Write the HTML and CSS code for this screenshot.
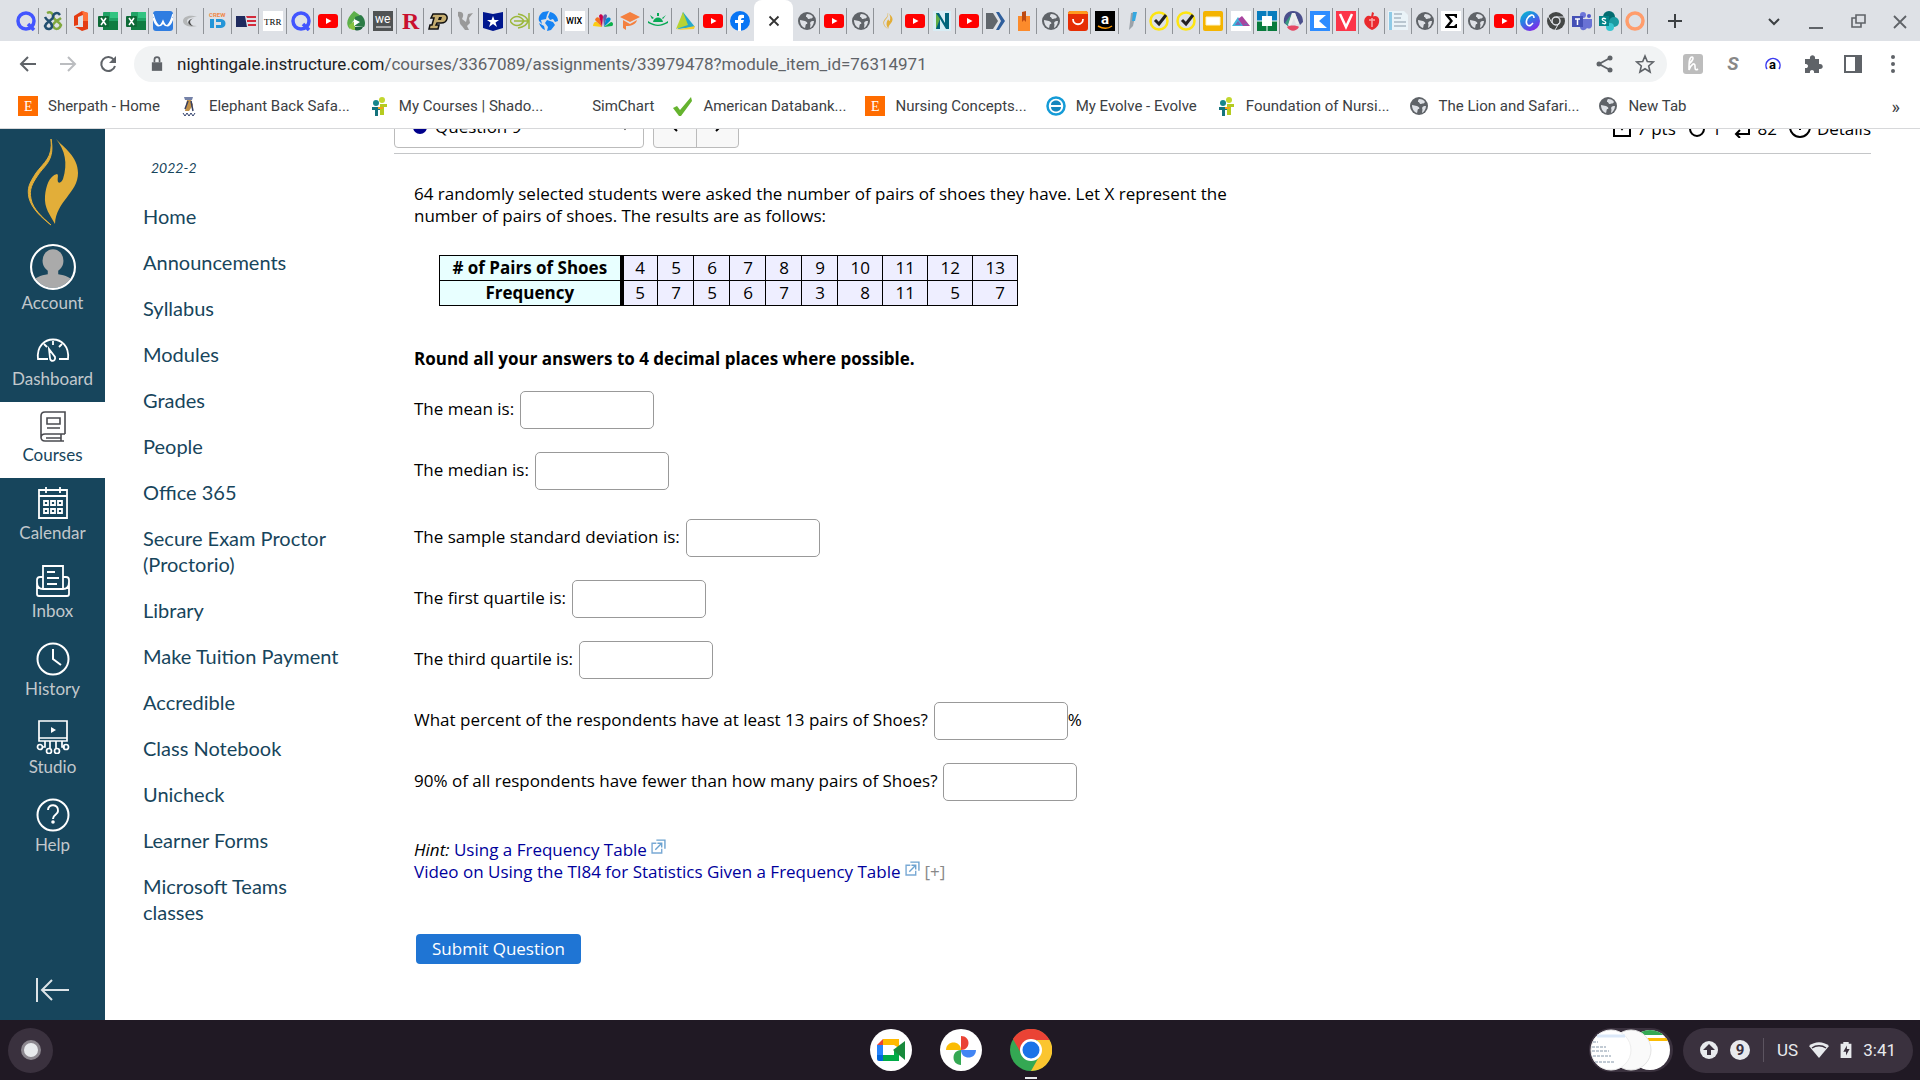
FILE: index.html
```
<!DOCTYPE html>
<html lang="en">
<head>
<meta charset="utf-8">
<title>Nightingale course assignment</title>
<link rel="stylesheet" href="styles.css">
</head>
<body>
<svg class="sprites" aria-hidden="true">
  <symbol id="yt" viewBox="0 0 20 20"><rect y="3" width="20" height="14" rx="3" fill="#f00"/><path d="M8 7l5.500 3L8 13z" fill="#fff"/></symbol>
  <symbol id="globe" viewBox="0 0 20 20"><circle cx="10" cy="10" r="9" fill="#5f6368"/><path d="M3 9c2 0 3 1 5 1 2 1 3 2 2 3-2 0-1 2-2 4-3-1-5-4-5-8zM10 3c3 0 5 1 6 3-1 2-2 1-4 2-2 0-1-2-3-2 0-1 0-2 1-3zM17 10c0 3-2 6-4 7 0-2 1-3 0-5 1-2 2-2 4-2z" fill="#dee1e6"/></symbol>
  <symbol id="q" viewBox="0 0 20 20"><circle cx="10" cy="10" r="8" fill="none" stroke="#4255ff" stroke-width="3.500"/><path d="M12 13l6 6" stroke="#4255ff" stroke-width="3.500"/></symbol>
  <symbol id="excel" viewBox="0 0 20 20"><rect x="5" y="1" width="15" height="18" rx="1" fill="#21a366"/><path d="M5 10h15v9H5z" fill="#107c41"/><path d="M12 1h8v6h-8z" fill="#33c481"/><rect y="5" width="11" height="11" rx="1" fill="#0e6a37"/><path d="M3 7l5 7M8 7l-5 7" stroke="#fff" stroke-width="1.600"/></symbol>
  <symbol id="norton" viewBox="0 0 20 20"><circle cx="10" cy="10" r="8.500" fill="none" stroke="#fde512" stroke-width="2.500"/><path d="M6 9l4 4 7-9" fill="none" stroke="#222" stroke-width="3"/></symbol>
  <symbol id="people" viewBox="0 0 20 20"><circle cx="13" cy="4" r="3" fill="#c3d72f"/><circle cx="7" cy="7" r="3" fill="#16868c"/><path d="M3 11h8v3H9v6H6v-6H3z" fill="#14737c"/><path d="M11 8h7v3h-3v8h-4z" fill="#b5cb20"/><path d="M9 11h5v2H9z" fill="#f4a11a"/></symbol>
  <symbol id="ext" viewBox="0 0 14 14"><path d="M5 4H1v9h9V9" fill="none" stroke="#79a9d5" stroke-width="1.300"/><path d="M5 1h8v8M4 10l6-6M6 4h4v4" fill="none" stroke="#6ba2d0" stroke-width="1.300"/></symbol>
  <symbol id="flame" viewBox="0 0 52 88"><path d="M29 1c7 8 22 17 22 34 0 20-22 28-23 51-5-9-11-16-10-28 1-10 4-20 12-22 2 1 0 4 1 8 2 2 4-1 5-3 5-16 2-29-7-40z" fill="#e2ae39"/><path d="M24 1c2 19-7 23-15 34C2 46 0 50 2 60c3 11 12 19 22 27C15 79 6 71 4 61 2 51 5 46 11 37 18 27 28 22 24 1z" fill="#e2ae39" stroke="#e2ae39"/></symbol>
</svg>

<header class="browser">
  <div class="tabs">
    <div class="tab-group group-a">
      <button class="tab"><svg><use href="#q"/></svg></button>
      <button class="tab"><svg viewBox="0 0 20 20"><g fill="none" stroke-width="2.500"><path d="M4 2c4-2 6 1 6 3 0 4 6 5 8 9-2 5-6 5-8 1-1-3 4-5 8-8" stroke="#80a83e"/><path d="M17 4c-3-4-7-1-7 2S4 10 2 15c2 5 7 3 7 0 0-4-5-5-7-9" stroke="#224f70"/></g></svg></button>
      <button class="tab"><svg viewBox="0 0 20 20"><path d="M11 0l6 2v16l-6 2-7-4h8V4L7 6v8l-4 1V5z" fill="#e43c12"/><path d="M11 0l6 2v8h-5V4z" fill="#ff7139"/></svg></button>
      <button class="tab"><svg><use href="#excel"/></svg></button>
      <button class="tab"><svg><use href="#excel"/></svg></button>
      <button class="tab"><svg viewBox="0 0 20 20"><rect width="20" height="20" rx="3" fill="#2f7de1"/><path d="M0 7c3 10 7 10 10 3 3 7 7 7 10-3M0 3c4 14 7 13 10 9 3 4 6 5 10-9" fill="none" stroke="#fff" stroke-width="1.300"/></svg></button>
      <button class="tab"><svg viewBox="0 0 20 20"><path d="M16 6C8 3 2 6 2 10s6 7 14 5C9 15 6 12 6 10s3-4 10-4z" fill="#b5b7b8"/><path d="M13 7c-5 2-5 5-1 8-6-1-7-6 1-8z" fill="#444"/></svg></button>
      <button class="tab"><svg viewBox="0 0 20 20"><text x="1" y="6" font-size="6" font-weight="700" fill="#f08848">CREW</text><path d="M2 8h4v9H2zM8 8h5c6 0 6 9 0 9H8v-3h5v-3H8z" fill="#2596d8"/></svg></button>
      <button class="tab"><svg viewBox="0 0 20 20"><path d="M0 5h9l2 11H0z" fill="#1e2a5e"/><path d="M10 5h10v2H11zM11 9h9v2h-9zM12 13h8v2h-8z" fill="#d32b3c"/></svg></button>
      <button class="tab"><svg viewBox="0 0 20 20"><path d="M0 0h20v20H0z" fill="#fff"/><text class="serif" x="1" y="14" font-size="9">TRR</text></svg></button>
      <button class="tab"><svg><use href="#q"/></svg></button>
      <button class="tab"><svg><use href="#yt"/></svg></button>
      <button class="tab"><svg viewBox="0 0 20 20"><path d="M8 0l7 5-8 5-3 8c-5-5-3-11 4-18z" fill="#5db04b"/><path d="M15 4c4 3 5 9 3 12l-9-1V6z" fill="#2b7b46"/><path d="M3 14l6-4v9c-4 0-6-2-6-5z" fill="#87c341"/><path d="M8 8l6 3-6 4z" fill="#fff"/><path d="M9 16h8c-2 4-6 4-8 3z" fill="#1d623c"/></svg></button>
      <button class="tab"><svg viewBox="0 0 20 20"><path d="M0 0h20v20H0z" fill="#505354"/><text x="2" y="12" font-size="12" fill="#fff">we</text><path d="M3 16h15" stroke="#fff"/></svg></button>
      <button class="tab"><svg viewBox="0 0 20 20"><text class="serif" x="1" y="18" font-size="24" font-weight="700" fill="#c9102f">R</text></svg></button>
      <button class="tab"><svg viewBox="0 0 20 20"><path d="M5 3h11c5 1 4 9-3 9H9l-1 2h3l-1 4H1l1-4h2l2-7H3z" fill="#c5ad70" stroke="#111" stroke-width="1.500"/><path d="M11 6h3l-1 3h-3z" fill="#111"/></svg></button>
      <button class="tab"><svg viewBox="0 0 20 20"><path d="M3 1c6-1 6 4 4 7l4 3 2-8 5-1-4 5 1 5-3 3 2 4h-4l-3-4c-4-3-1-7-4-10z" fill="#999"/></svg></button>
      <button class="tab"><svg viewBox="0 0 20 20"><path d="M0 1l10 2 10-2v16l-10 3-10-3z" fill="#00178e"/><path d="M10 5l1.500 4H16l-3.500 2.500L14 16l-4-3-4 3 1.500-4.500L4 9h4.500z" fill="#fff"/></svg></button>
      <button class="tab"><svg viewBox="0 0 20 20"><g fill="none" stroke="#9cb83c" stroke-width="1.500"><path d="M0 10c4-6 10-6 14 0-4 6-10 6-14 0zM4 10h15M8 3c6 1 9 3 10 7-1 4-4 6-10 7M19 2v16"/></g></svg></button>
      <button class="tab"><svg viewBox="0 0 20 20"><path d="M5 1l6-1-2 4-1 4-5 1 1 4-3-3C0 6 2 3 5 1zM12 1c5 1 8 5 8 9l-3 1-2-3-3 1-2-3zM9 9l6 2 2 3-4 5-4 1 1-4-3-4zM1 12l5 3 1 4c-3-1-5-4-6-7z" fill="#1683f3"/></svg></button>
      <button class="tab"><svg viewBox="0 0 20 20"><path d="M0 0h20v20H0z" fill="#fff"/><text x="1" y="13" font-size="9" font-weight="500">WIX</text></svg></button>
      <button class="tab"><svg viewBox="0 0 20 20"><path d="M9 16L0 15c0-4 3-5 4-4z" fill="#fccc12"/><path d="M9 16L2 9c1-4 4-3 5-1z" fill="#f37021"/><path d="M9 16L6 5c1-3 4-2 4 1z" fill="#cc004c"/><path d="M11 16L10 6c1-4 4-3 4-1z" fill="#6460aa"/><path d="M11 16l2-8c3-3 6-1 4 2z" fill="#0089d0"/><path d="M11 16l7-5c3 0 2 4 1 4z" fill="#0db14b"/></svg></button>
      <button class="tab"><svg viewBox="0 0 20 20"><path d="M0 6l10-5 10 5-10 5z" fill="#f4803f"/><path d="M3 9v8l3 2v-4c6 0 10-2 11-6l-7 4z" fill="#f4803f"/></svg></button>
      <button class="tab"><svg viewBox="0 0 20 20"><path d="M5 11c1-6 9-6 10 0zM9 2h2v3H9zM2 4l4 3-2 1zM18 4l-3 4-1-1zM0 10c8 5 12 5 20 0v2c-8 4-12 4-20 0z" fill="#08a955"/></svg></button>
      <button class="tab"><svg viewBox="0 0 20 20"><path d="M8 1l12 15-17 2z" fill="#27a8c9"/><path d="M8 1l5 13-12 4z" fill="#b8d334"/><path d="M1 19l19-4-1 3z" fill="#f5ce2d"/></svg></button>
      <button class="tab"><svg><use href="#yt"/></svg></button>
      <button class="tab last"><svg viewBox="0 0 20 20"><circle cx="10" cy="10" r="10" fill="#0875f4"/><path d="M8 20v-8H5V9h3V7c0-3 2-4 6-3v3c-2 0-3 0-3 2h3l-1 3h-2v8z" fill="#fff"/></svg></button>
    </div>
    <button class="tab tab-active" aria-label="Close tab"><svg viewBox="0 0 20 20"><path d="M5 5l10 10M15 5L5 15" stroke="#333" stroke-width="2"/></svg></button>
    <div class="tab-group group-b">
      <button class="tab"><svg><use href="#globe"/></svg></button>
      <button class="tab"><svg><use href="#yt"/></svg></button>
      <button class="tab"><svg><use href="#globe"/></svg></button>
      <button class="tab"><svg class="small"><use href="#flame"/></svg></button>
      <button class="tab"><svg><use href="#yt"/></svg></button>
      <button class="tab"><svg viewBox="0 0 20 20"><path d="M1 0h18v20H1z" fill="#d8edf5"/><path d="M4 18V2h3l6 10V2h4v16h-3L8 8v10z" fill="#00647a"/><path d="M4 2v16l4-10z" fill="#60ad46"/></svg></button>
      <button class="tab"><svg><use href="#yt"/></svg></button>
      <button class="tab"><svg viewBox="0 0 20 20"><path d="M0 2h7l5 8-5 8H0z" fill="#60666c"/><path d="M10 1l5 9-5 9h3l6-9-6-9z" fill="#2f5f9c"/></svg></button>
      <button class="tab"><svg viewBox="0 0 20 20"><path d="M4 5h12v15H4z" fill="#fc8b2c"/><path d="M8 1l4-1v11l-2-2-2 2z" fill="#bd4a12"/></svg></button>
      <button class="tab"><svg><use href="#globe"/></svg></button>
      <button class="tab"><svg viewBox="0 0 20 20"><rect width="20" height="20" rx="3" fill="#e62e04"/><path d="M0 3q0-3 3-3h14q3 0 3 3z" fill="#ff9a1f"/><path d="M5 8c0 7 10 7 10 0" fill="none" stroke="#fff" stroke-width="1.800"/></svg></button>
      <button class="tab"><svg viewBox="0 0 20 20"><path d="M0 0h20v20H0z"/><text x="6" y="13" font-size="15" font-weight="700" fill="#fff">a</text><path d="M3 15c5 3 10 3 14 0" fill="none" stroke="#f90" stroke-width="1.500"/></svg></button>
      <button class="tab"><svg viewBox="0 0 20 20"><path d="M9 2l5-1-3 14-4 4 1-8z" fill="#9ba3aa"/><path d="M11 1h4l-2 9h-3z" fill="#35a8e0"/></svg></button>
      <button class="tab"><svg><use href="#norton"/></svg></button>
      <button class="tab"><svg><use href="#norton"/></svg></button>
      <button class="tab"><svg viewBox="0 0 20 20"><rect width="20" height="20" rx="2" fill="#f4b400"/><path d="M3 6h14v8H3z" fill="#fff" stroke="#fff3c4"/></svg></button>
      <button class="tab"><svg viewBox="0 0 20 20"><path d="M0 0h20v20H0z" fill="#fff"/><path d="M1 15l6-9 6 9z" fill="#40b6dd"/><path d="M7 8l4-3 8 10h-7z" fill="#a9449e"/><path d="M4 14l3-4 3 4zM12 14l3-2 2 2z" fill="#716bb4"/></svg></button>
    </div>
    <div class="tab-group group-c">
      <button class="tab"><svg viewBox="0 0 20 20"><path d="M0 0h20v10H0z" fill="#087cbd"/><path d="M0 10h20v10H0z" fill="#087b3d"/><rect x="5" y="5" width="10" height="10" fill="#fff"/><path d="M10 0v20M0 10h5M15 10h5" stroke="#fff"/></svg></button>
      <button class="tab"><svg viewBox="0 0 20 20"><path d="M10 0C3 0 0 6 1 12l4 3L9 2h3l5 12 3-3C20 4 16 0 10 0z" fill="#4a4f8c"/><path d="M9 2L5 15l-3-3z" fill="#3a9c82"/><path d="M4 16c2-2 10-2 12 0-3 5-9 5-12 0z" fill="#e54864"/><path d="M9 2h3l4 11h-3l-2-6-3 7H5z" fill="#eee"/></svg></button>
      <button class="tab"><svg viewBox="0 0 20 20"><path d="M0 0h20v20H0z" fill="#2d8cff"/><path d="M4 4h12L9 10l8 7H4z" fill="#fff"/></svg></button>
      <button class="tab"><svg viewBox="0 0 20 20"><path d="M0 0h20v20H0z" fill="#fc3549"/><path d="M4 3l6 13 6-13" fill="none" stroke="#fff" stroke-width="2.500"/></svg></button>
      <button class="tab"><svg viewBox="0 0 20 20"><path d="M10 19C3 16 0 10 4 6c2-2 4-1 6 0 3-2 6-1 7 2 1 5-2 9-7 11zM9 6l1-5 2 1-1 4z" fill="#e92a2d"/><path d="M10 7v9M7 9h6" stroke="#f9aaaa" stroke-width="1.500"/></svg></button>
      <button class="tab"><svg viewBox="0 0 20 20"><path d="M0 0h16l4 4v15H0z" fill="#eaf3f8"/><path d="M1 1h3v18H1z" fill="#8ecae6"/><path d="M6 3h8M6 7h7M6 11h12M6 15h12" stroke="#a9b8c2" stroke-width="1.500"/></svg></button>
      <button class="tab"><svg><use href="#globe"/></svg></button>
      <button class="tab"><svg viewBox="0 0 20 20"><path d="M0 0h20v20H0z" fill="#fff"/><path d="M4 3h12v4h-1l-2-2H8l4 5-4 5h5l2-2h1v4H4v-1l5-6-5-6z"/></svg></button>
      <button class="tab"><svg><use href="#globe"/></svg></button>
      <button class="tab"><svg><use href="#yt"/></svg></button>
      <button class="tab"><svg viewBox="0 0 20 20"><defs><linearGradient id="cg" x2=".6" y2="1"><stop stop-color="#00c4cc"/><stop offset=".5" stop-color="#2c7be5"/><stop offset="1" stop-color="#7d2ae8"/></linearGradient></defs><circle cx="10" cy="10" r="10" fill="url(#cg)"/><path d="M14 7c0-5-5-3-7 1-2 5 1 8 4 6l2-2" fill="none" stroke="#fff" stroke-width="1.600"/></svg></button>
      <button class="tab"><svg viewBox="0 0 20 20"><circle cx="10" cy="10" r="9" fill="#444746"/><circle cx="10" cy="10" r="4" fill="#444746" stroke="#dee1e6" stroke-width="1.500"/><path d="M10 6h9M6 12L2 5M13 12l-4 7" stroke="#dee1e6"/></svg></button>
      <button class="tab"><svg viewBox="0 0 20 20"><circle cx="11" cy="4" r="3" fill="#6c75da"/><circle cx="17" cy="5" r="2" fill="#5059c9"/><path d="M8 8h12v7c-1 3-3 3-5 2-3 4-7 2-7-1z" fill="#6972d4"/><path d="M0 5h11v11H0z" fill="#4450b6"/><path d="M3 8h5M5.500 8v6" stroke="#fff" stroke-width="1.500"/></svg></button>
      <button class="tab"><svg viewBox="0 0 20 20"><circle cx="10" cy="6" r="6" fill="#036c70"/><circle cx="15" cy="11" r="5" fill="#1a9ba1"/><circle cx="11" cy="16" r="4" fill="#37c6d0"/><path d="M0 5h10v10H0z" fill="#038387"/><path d="M7 8c-4-2-5 1-2 2s2 4-2 2" fill="none" stroke="#fff" stroke-width="1.300"/></svg></button>
      <button class="tab"><svg viewBox="0 0 20 20"><circle cx="10" cy="10" r="8" fill="none" stroke="#ff9d6c" stroke-width="3.500"/></svg></button>
    </div>
    <div class="window-controls">
      <button aria-label="New tab"><svg viewBox="0 0 20 20"><path d="M10 3v14M3 10h14" stroke="#3c4043" stroke-width="2"/></svg></button>
      <span class="grow"></span>
      <button aria-label="Search tabs"><svg viewBox="0 0 20 20"><path d="M5 8l5 5 5-5" stroke="#3c4043" stroke-width="2" fill="none"/></svg></button>
      <button aria-label="Minimize"><svg viewBox="0 0 20 20"><path d="M3 17h14" stroke="#5f6368" stroke-width="2"/></svg></button>
      <button aria-label="Restore"><svg viewBox="0 0 20 20"><path d="M8 4h9v8H8zM8 7H4v9h9v-4" stroke="#5f6368" stroke-width="1.600" fill="none"/></svg></button>
      <button aria-label="Close"><svg viewBox="0 0 20 20"><path d="M4 5l12 12M16 5L4 17" stroke="#5f6368" stroke-width="1.800"/></svg></button>
    </div>
  </div>

  <div class="toolbar">
    <div class="history-buttons">
      <button aria-label="Back"><svg viewBox="0 0 20 20"><path d="M18 10H3M10 3l-7 7 7 7" stroke="#5f6368" stroke-width="2" fill="none"/></svg></button>
      <button aria-label="Forward"><svg viewBox="0 0 20 20"><path d="M2 10h15M10 3l7 7-7 7" stroke="#bbbdc0" stroke-width="2" fill="none"/></svg></button>
      <button aria-label="Reload"><svg viewBox="0 0 20 20"><path d="M16 6a7 7 0 1 0 1 6" stroke="#5f6368" stroke-width="2" fill="none"/><path d="M18 2v7h-7z" fill="#5f6368"/></svg></button>
    </div>
    <div class="omnibox">
      <svg class="lock" viewBox="0 0 14 18"><path d="M1 7h12v10H1z" fill="#5f6368"/><path d="M4 7V4a3 3 0 0 1 6 0v3" fill="none" stroke="#5f6368" stroke-width="2"/></svg>
      <span class="url"><b>nightingale.instructure.com</b>/courses/3367089/assignments/33979478?module_item_id=76314971</span>
      <button aria-label="Share"><svg viewBox="0 0 20 20"><path d="M15 4L4 10l11 6" stroke="#5f6368" stroke-width="1.800" fill="none"/><g fill="#5f6368"><circle cx="15" cy="4" r="2.500"/><circle cx="4" cy="10" r="2.500"/><circle cx="15" cy="16" r="2.500"/></g></svg></button>
      <button aria-label="Bookmark"><svg viewBox="0 0 20 20"><path d="M10 2l2.300 5.500 6 .5-4.600 4 1.400 6-5.100-3.200L4.900 18l1.400-6-4.600-4 6-.5z" fill="none" stroke="#5f6368" stroke-width="1.600"/></svg></button>
    </div>
    <div class="extensions">
      <button aria-label="Honey"><svg viewBox="0 0 20 20"><rect width="20" height="20" rx="3" fill="#bdbdbd"/><path d="M6 10c4-3 5-7 3-7-3 0-3 6-3 13 2-6 6-8 6-4 0 3 0 5 3 3" stroke="#fff" stroke-width="1.600" fill="none"/></svg></button>
      <button class="scribe" aria-label="Scribe">S</button>
      <button aria-label="Reader"><svg viewBox="0 0 20 20"><path d="M4 15a7 7 0 1 1 12 0" fill="none" stroke="#3b3bf0" stroke-width="1.500"/><text x="6" y="15" font-size="13" font-weight="700">a</text></svg></button>
      <button aria-label="Extensions"><svg viewBox="0 0 20 20"><path d="M2 5h5c-1-5 6-5 5 0h4v5c5-1 5 6 0 5v4h-5c1-4-5-4-4 0H2v-5c4 1 4-5 0-4z" fill="#5f6368"/></svg></button>
      <button aria-label="Side panel"><svg viewBox="0 0 20 20"><path d="M2 2h16v16H2z" fill="none" stroke="#5f6368" stroke-width="2"/><path d="M12 2h6v16h-6z" fill="#5f6368"/></svg></button>
      <button aria-label="Menu"><svg viewBox="0 0 20 20"><g fill="#5f6368"><circle cx="10" cy="3" r="2"/><circle cx="10" cy="10" r="2"/><circle cx="10" cy="17" r="2"/></g></svg></button>
    </div>
  </div>

  <nav class="bookmarks">
    <a href="#"><svg viewBox="0 0 20 20"><path d="M0 0h20v20H0z" fill="#ff6c00"/><text class="serif" x="6" y="15" font-size="14" fill="#fff">E</text></svg>Sherpath - Home</a>
    <a href="#"><svg viewBox="0 0 20 20"><path d="M5 1h9l-1 3H6z" fill="#7582a8"/><path d="M8 4h4l2 5-4 6H6z" fill="#c29148"/><path d="M12 5l2 10M9 5L6 13" stroke="#384061" stroke-width="1.500"/><path d="M4 17l2 3 2-3 2 3 2-3 2 3 2-3" fill="none" stroke="#31406c"/></svg>Elephant Back Safa...</a>
    <a href="#"><svg><use href="#people"/></svg>My Courses | Shado...</a>
    <a href="#"><svg></svg>SimChart</a>
    <a href="#"><svg viewBox="0 0 20 20"><path d="M0 12l4-2 3 4L18 1l1 4L8 20H6z" fill="#65b32e"/></svg>American Databank...</a>
    <a href="#"><svg viewBox="0 0 20 20"><path d="M0 0h20v20H0z" fill="#ff6c00"/><text class="serif" x="6" y="15" font-size="14" fill="#fff">E</text></svg>Nursing Concepts...</a>
    <a href="#"><svg viewBox="0 0 20 20"><circle cx="10" cy="10" r="8.500" fill="#fff" stroke="#149bd7" stroke-width="2.500"/><path d="M5 9c0-6 10-6 10 0zM5 11h10c0 6-10 6-10 0z" fill="#1686bd"/></svg>My Evolve - Evolve</a>
    <a href="#"><svg><use href="#people"/></svg>Foundation of Nursi...</a>
    <a href="#"><svg><use href="#globe"/></svg>The Lion and Safari...</a>
    <a href="#"><svg><use href="#globe"/></svg>New Tab</a>
    <button class="more" aria-label="More bookmarks">»</button>
  </nav>
</header>

<div class="page">
  <nav class="global-nav">
    <a class="logo" href="#" aria-label="Nightingale"><svg><use href="#flame"/></svg></a>
    <a class="account" href="#"><svg viewBox="0 0 44 44"><defs><clipPath id="av"><circle cx="22" cy="22" r="20"/></clipPath></defs><g clip-path="url(#av)" fill="#aaa"><ellipse cx="22" cy="16" rx="10" ry="11"/><path d="M17 24h10v5c8 1 14 4 16 10v5H1v-5c2-6 8-9 16-10z"/></g><circle cx="22" cy="22" r="21" fill="none" stroke="#fff" stroke-width="2"/></svg>Account</a>
    <a class="upper" href="#"><svg viewBox="0 0 34 32"><g fill="none" stroke="#fff" stroke-width="1.800"><path d="M12 25H2c-3-26 33-26 30 0h-9M17 7v4M8 10l3 3M26 10l-3 3M13 15l6 8c1 5-5 5-5 1z"/></g></svg>Dashboard</a>
    <a class="upper active" href="#"><svg viewBox="0 0 34 32"><g fill="none" stroke="#4a4b50" stroke-width="1.600"><path d="M29 24V2H9Q5 2 5 6v21q0 4 4 4h19M29 24H9q-4 0-4 4M10 28h15M25 24v7M11 8h13v6H11zM11 18h13"/></g></svg>Courses</a>
    <a href="#"><svg viewBox="0 0 34 34"><g fill="none" stroke="#fff" stroke-width="1.800"><path d="M3 4h28v28H3zM3 10h28M10 1v6M24 1v6M8 15h4v4H8zM15 15h4v4h-4zM22 15h4v4h-4zM8 23h4v4H8zM15 23h4v4h-4zM22 23h4v4h-4z"/></g></svg>Calendar</a>
    <a href="#"><svg viewBox="0 0 34 34"><g fill="none" stroke="#fff" stroke-width="1.800"><path d="M7 24V2h20v22M7 13H4q-3 0-3 3v14q0 2 2 2h28q2 0 2-2V16q0-3-3-3h-3M1 18c0 5 2 7 6 7h20c4 0 6-2 6-7M11 8h8M11 14h12M11 20h10"/></g></svg>Inbox</a>
    <a href="#"><svg viewBox="0 0 34 34"><g fill="none" stroke="#fff" stroke-width="2"><circle cx="17" cy="17" r="15.500"/><path d="M17 7v10l8 6"/></g></svg>History</a>
    <a href="#"><svg viewBox="0 0 34 34"><g fill="none" stroke="#fff" stroke-width="1.700"><path d="M3 1h28v20H3zM3 18h28M9 21v6H6M14 21v7M20 21v7M26 21v6h3"/><circle cx="4" cy="27" r="2.500"/><circle cx="13" cy="31" r="2.500"/><circle cx="21" cy="31" r="2.500"/><circle cx="30" cy="27" r="2.500"/></g><path d="M15 7l5 3-5 3z" fill="#fff"/></svg>Studio</a>
    <a href="#"><svg viewBox="0 0 34 34"><g fill="none" stroke="#fff" stroke-width="2"><circle cx="17" cy="17" r="15.500"/><path d="M12 12c0-7 11-6 10 1 0 4-5 3-5 8"/></g><circle cx="17" cy="24" r="1.800" fill="#fff"/></svg>Help</a>
    <button class="collapse" aria-label="Minimize navigation"><svg viewBox="0 0 34 24"><path d="M1 0v24M33 12H7M16 2L6 12l10 10" fill="none" stroke="#dce3e7" stroke-width="2"/></svg></button>
  </nav>

  <nav class="course-menu">
    <p class="term">2022-2</p>
    <a href="#">Home</a>
    <a href="#">Announcements</a>
    <a href="#">Syllabus</a>
    <a href="#">Modules</a>
    <a href="#">Grades</a>
    <a href="#">People</a>
    <a href="#">Office 365</a>
    <a href="#">Secure Exam Proctor (Proctorio)</a>
    <a href="#">Library</a>
    <a href="#">Make Tuition Payment</a>
    <a href="#">Accredible</a>
    <a href="#">Class Notebook</a>
    <a href="#">Unicheck</a>
    <a href="#">Learner Forms</a>
    <a href="#">Microsoft Teams classes</a>
  </nav>

  <main class="assignment">
    <div class="question-bar">
      <button class="picker"><span class="dot"></span>Question 9<svg viewBox="0 0 12 12"><path d="M2 3l4 5 4-5" fill="none" stroke="#222" stroke-width="1.500"/></svg></button>
      <div class="stepper">
        <button aria-label="Previous question"><svg viewBox="0 0 12 12"><path d="M8 1L3 6l5 5" fill="none" stroke="#000" stroke-width="2"/></svg></button>
        <button aria-label="Next question"><svg viewBox="0 0 12 12"><path d="M4 1l5 5-5 5" fill="none" stroke="#000" stroke-width="2"/></svg></button>
      </div>
      <div class="meta">
        <span><svg viewBox="0 0 18 18"><path d="M5 4H1v12h16V4h-4M6 5l3 4 3-4M9 0v8" fill="none" stroke="#000" stroke-width="2"/></svg>7 pts</span>
        <span><svg viewBox="0 0 18 18"><path d="M4 4a7 7 0 1 0 10 0" fill="none" stroke="#000" stroke-width="2"/></svg>1</span>
        <span><svg viewBox="0 0 18 18"><path d="M2 5h14v9H3M7 10l-4 4 4 4" fill="none" stroke="#000" stroke-width="2"/></svg>82</span>
        <span><svg class="clock" viewBox="0 0 22 18"><circle cx="11" cy="7" r="10" fill="none" stroke="#000" stroke-width="2"/><path d="M11 2v8" stroke="#000" stroke-width="2"/></svg>Details</span>
      </div>
    </div>

    <form class="question" onsubmit="return false">
      <p class="prompt">64 randomly selected students were asked the number of pairs of shoes they have. Let X represent the number of pairs of shoes. The results are as follows:</p>
      <table>
        <tr><th># of Pairs of Shoes</th><td>4</td><td>5</td><td>6</td><td>7</td><td>8</td><td>9</td><td class="wide">10</td><td class="wide">11</td><td class="wide">12</td><td class="wide">13</td></tr>
        <tr><th>Frequency</th><td>5</td><td>7</td><td>5</td><td>6</td><td>7</td><td>3</td><td>8</td><td>11</td><td>5</td><td>7</td></tr>
      </table>
      <p class="rounding">Round all your answers to 4 decimal places where possible.</p>
      <div class="answers">
        <div class="field"><label for="a1">The mean is:</label><input id="a1" type="text"></div>
        <div class="field"><label for="a2">The median is:</label><input id="a2" type="text"></div>
      </div>
      <div class="answers">
        <div class="field"><label for="a3">The sample standard deviation is:</label><input id="a3" type="text"></div>
        <div class="field"><label for="a4">The first quartile is:</label><input id="a4" type="text"></div>
        <div class="field"><label for="a5">The third quartile is:</label><input id="a5" type="text"></div>
        <div class="field"><label for="a6">What percent of the respondents have at least 13 pairs of Shoes?</label><input id="a6" type="text"><span>%</span></div>
        <div class="field"><label for="a7">90% of all respondents have fewer than how many pairs of Shoes?</label><input id="a7" type="text"></div>
      </div>
      <div class="hints">
        <div><i>Hint:</i> <a href="#">Using a Frequency Table <svg><use href="#ext"/></svg></a></div>
        <div><a href="#">Video on Using the TI84 for Statistics Given a Frequency Table <svg><use href="#ext"/></svg></a> <span class="expand">[+]</span></div>
      </div>
      <button class="submit" type="submit">Submit Question</button>
    </form>
  </main>
</div>

<footer class="shelf">
  <button class="launcher" aria-label="Launcher"><span></span></button>
  <div class="apps">
    <button aria-label="Meet"><svg viewBox="0 0 42 42"><circle cx="21" cy="21" r="21" fill="#fff"/><path d="M7 16h6v10H7z" fill="#2684fc"/><path d="M13 10v6H7z" fill="#ea4335"/><path d="M13 10h16v9l-5-3H13z" fill="#ffba00"/><path d="M7 26h6v6H9q-2 0-2-2z" fill="#0066da"/><path d="M13 26h11v-4l5-1v11H13z" fill="#00ac47"/><path d="M23 21l12-9v19z" fill="#188a3c"/></svg></button>
    <button aria-label="Photos"><svg viewBox="0 0 42 42"><circle cx="21" cy="21" r="21" fill="#fff"/><path d="M21 7c10 0 10 14 0 14z" fill="#ea4335"/><path d="M36 21c0 10-15 10-15 0z" fill="#4285f4"/><path d="M21 36c-10 0-10-15 0-15z" fill="#34a853"/><path d="M6 21c0-10 15-10 15 0z" fill="#fbbc04"/></svg></button>
    <button class="running" aria-label="Chrome"><svg viewBox="0 0 42 42"><circle cx="21" cy="21" r="21" fill="#34a853"/><path d="M3 10a21 21 0 0 1 36 0L39 11H21L12 26z" fill="#ea4335"/><path d="M39 10A21 21 0 0 1 21 42L30 26 27 11h12z" fill="#fbc52f"/><circle cx="21" cy="21" r="11" fill="#fff"/><circle cx="21" cy="21" r="8.500" fill="#1a73e8"/></svg></button>
  </div>
  <div class="status-area">
    <button class="holding" aria-label="Recent files"><svg viewBox="0 0 84 44"><clipPath id="c3"><circle cx="61" cy="22" r="20"/></clipPath><rect width="84" height="44" rx="22" fill="#3a313e"/><circle cx="61" cy="22" r="20" fill="#fff"/><g clip-path="url(#c3)"><path d="M40 2h42v5H40z" fill="#34a853"/><path d="M40 10h42v3H40z" fill="#fbbc04"/></g><circle cx="42" cy="22" r="20" fill="#fafafa" stroke="#e4e4e4"/><circle cx="22" cy="22" r="20" fill="#fff" stroke="#eee"/><path d="M4 14h5M3 19h14M3 23h17M4 28h18M6 34h20" stroke="#8496a8" stroke-dasharray="3 1"/><path d="M8 8h28" stroke="#dbe8f8" stroke-width="3"/></svg></button>
    <button class="status">
      <svg viewBox="0 0 20 20"><circle cx="10" cy="10" r="9" fill="#e8eaed"/><path d="M10 4l6 6h-4v5H8v-5H4z" fill="#3a313e"/></svg>
      <span class="count">9</span>
      <span class="divider"></span>
      <span>US</span>
      <svg viewBox="0 0 20 20"><path d="M0 6c6-5 14-5 20 0L10 18z" fill="#e8eaed"/><path d="M3 8c4-3 10-3 14 0" fill="none" stroke="#3a313e" stroke-width="1.500"/></svg>
      <svg class="battery" viewBox="0 0 12 20"><path d="M3 1h6v2h3v16H0V3h3z" fill="#e8eaed"/><path d="M7 5l-4 7h3v4l4-7H7z" fill="#3a313e"/></svg>
      <span>3:41</span>
    </button>
  </div>
</footer>
</body>
</html>
```
FILE: styles.css
```
* { box-sizing: border-box; }
body { margin: 0; height: 100vh; display: flex; flex-direction: column; background: #fff; font-family: Roboto, sans-serif; color: #000; overflow: hidden; }
button { border: 0; padding: 0; background: none; font: inherit; color: inherit; }
a { text-decoration: none; color: inherit; }
svg { display: block; width: 20px; height: 20px; flex: none; }
.sprites { position: absolute; width: 0; height: 0; }
.serif { font-family: "Liberation Serif", serif; }
.grow { flex: 1; }

/* Browser chrome */
.browser { flex: none; border-bottom: 1px solid #d7d8da; }
.tabs { display: flex; height: 41px; padding-left: 12px; background: #dee1e6; }
.tab-group { display: flex; min-width: 0; }
.group-a { flex: 742; }
.group-b { flex: 461; }
.group-c { flex: 394; }
.tab { flex: 1; min-width: 0; display: flex; align-items: center; justify-content: center; position: relative; }
.tab::after { content: ""; position: absolute; right: 0; top: 8px; width: 1px; height: 26px; background: #8f9398; }
.tab.last::after, .tab-active::after { display: none; }
.tab-active { flex: 39; background: #fff; border-radius: 8px 8px 0 0; }
.tab-active svg { width: 18px; height: 18px; }
.tab .small { height: 16px; }
.window-controls { flex: none; width: 272px; display: flex; align-items: center; gap: 22px; padding: 0 10px 0 17px; }
.toolbar { display: flex; align-items: center; gap: 16px; height: 46px; padding: 0 17px 0 18px; }
.history-buttons { display: flex; gap: 20px; }
.omnibox { flex: 1; display: flex; align-items: center; gap: 20px; height: 36px; padding: 0 12px 0 17px; border-radius: 18px; background: #f1f3f4; }
.lock { width: 12px; height: 16px; margin-right: -6px; }
.url { flex: 1; font-size: 17px; line-height: 22px; color: #5f6368; white-space: nowrap; }
.url b { font-weight: 400; color: #202124; }
.extensions { display: flex; gap: 20px; }
.scribe { width: 20px; font-size: 19px; line-height: 20px; font-weight: 700; font-style: italic; color: #888; }
.bookmarks { display: flex; align-items: center; gap: 19px; height: 41px; padding: 0 20px 3px 18px; font-size: 15px; color: #3c4043; white-space: nowrap; }
.bookmarks a { display: flex; align-items: center; gap: 10px; }
.more { margin-left: auto; font-size: 18px; }

/* Canvas page */
.page { flex: 1; display: flex; min-height: 0; overflow: hidden; }
.global-nav { flex: none; width: 105px; display: flex; flex-direction: column; background: #17455c; color: #c2c8cc; font: 17px/22px Lato, sans-serif; }
.global-nav a { display: flex; flex-direction: column; align-items: center; gap: 2px; padding: 8px 0 12px; }
.global-nav a svg { width: 34px; height: 34px; }
.global-nav .logo { height: 109px; padding-top: 9px; }
.global-nav .logo svg { width: 52px; height: 88px; }
.global-nav .account svg { width: 46px; height: 46px; margin-top: -2px; }
.global-nav .upper svg { height: 32px; }
.global-nav .active { background: #fff; color: #17455c; }
.collapse { margin: auto auto 18px; }
.collapse svg { width: 34px; height: 24px; }
.course-menu { flex: none; width: 289px; padding: 28px 49px 0 38px; color: #17455c; font: 20px/26px Lato, sans-serif; }
.course-menu a { display: block; padding: 10px 0; }
.term { margin: 0 0 14px; padding-left: 8px; font-size: 14px; line-height: 22px; font-style: italic; }

/* Assignment */
.assignment { flex: 1; margin-right: 49px; font: 17px/22px "Open Sans", sans-serif; }
.question-bar { display: flex; height: 45px; margin-top: -20px; border-bottom: 1px solid #c4c6c8; }
.question-bar button { display: flex; align-items: center; }
.picker { width: 250px; height: 39px; padding: 0 12px 4px 18px; border: 1px solid #bbb; border-radius: 4px; }
.picker svg { width: 12px; height: 12px; margin-left: auto; }
.dot { width: 14px; height: 14px; margin-right: 8px; border-radius: 50%; background: #00008b; }
.stepper { display: flex; height: 39px; margin-left: 9px; border: 1px solid #bbb; border-radius: 4px; background: #f8f8f8; }
.stepper button { width: 42px; padding-bottom: 6px; justify-content: center; }
.stepper button + button { border-left: 1px solid #bbb; }
.stepper svg { width: 12px; height: 12px; }
.meta { display: flex; gap: 12px; height: 40px; margin-left: auto; }
.meta span { display: flex; align-items: center; gap: 6px; }
.meta svg { width: 18px; height: 18px; }
.meta .clock { width: 22px; }
.question { padding: 29px 20px 0; }
.question p { margin: 0; }
.prompt { max-width: 850px; }
table { margin: 28px 0 0 25px; border-collapse: collapse; border: 1px solid #000; line-height: 24px; }
th { width: 182px; padding: 0; border: 1px solid #000; border-right: 4px solid #000; background: #e8ffff; text-align: center; }
td { width: 36px; padding: 0 12px 0 0; border: 1px solid #000; background: #eeeeff; text-align: right; }
td.wide { width: 45px; }
.question .rounding { margin: 42px 0 21px; font-weight: 700; }
.answers { display: flex; flex-direction: column; gap: 23px; }
.answers + .answers { margin-top: 29px; }
.field { display: flex; align-items: center; line-height: 22px; }
.field label, .field span { padding-bottom: 3px; }
.field label { margin-right: 6px; }
.field input { width: 134px; height: 38px; border: 1px solid #999; border-radius: 5px; padding: 4px 8px; font: inherit; background: #fff; }
.hints { margin-top: 38px; }
.hints a { color: #00009c; }
.hints svg { display: inline-block; width: 15px; height: 15px; vertical-align: 2px; }
.expand { color: #888; }
.submit { display: block; height: 30px; margin: 51px 0 0 2px; padding: 0 16px; border-radius: 4px; background: #1f75d4; color: #fff; }

/* Shelf */
.shelf { flex: none; height: 60px; display: grid; grid-template-columns: 1fr auto 1fr; align-items: center; padding: 0 7px 0 8px; background: #201924; color: #e8eaed; }
.launcher { width: 45px; height: 45px; display: grid; place-items: center; border-radius: 50%; background: #3a313e; }
.launcher span { width: 20px; height: 20px; border: 3px solid #8c878f; border-radius: 50%; background: #e8eaed; }
.apps { display: flex; gap: 28px; }
.apps button { position: relative; }
.apps svg { width: 42px; height: 42px; }
.running::after { content: ""; position: absolute; left: 15px; bottom: -8px; width: 12px; height: 2px; background: #e8eaed; }
.status-area { display: flex; justify-content: flex-end; align-items: center; gap: 10px; }
.holding svg { width: 84px; height: 44px; }
.status { height: 45px; display: flex; align-items: center; gap: 11px; padding: 0 17px 0 16px; border-radius: 23px; background: #3a313e; font-size: 17px; }
.count { width: 20px; height: 20px; border-radius: 50%; background: #e8eaed; color: #3a313e; font-size: 15px; line-height: 20px; font-weight: 700; text-align: center; }
.divider { width: 1px; height: 24px; margin: 0 2px; background: #5c5460; }
.battery { width: 12px; height: 18px; }
```
